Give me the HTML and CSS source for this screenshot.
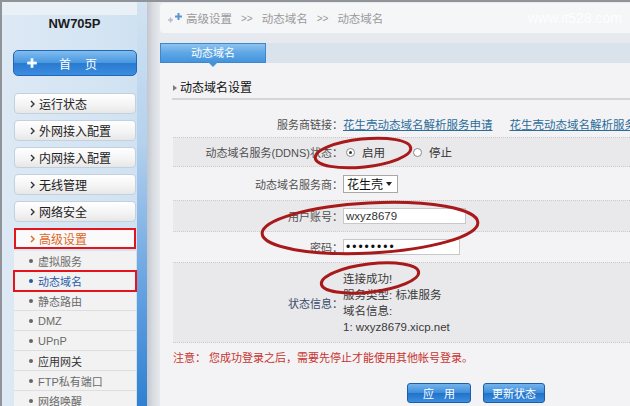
FILE: index.html
```html
<!DOCTYPE html>
<html lang="zh-CN">
<head>
    <meta charset="UTF-8">
    <meta name="viewport" content="width=device-width, initial-scale=1.0">
    <title>动态域名</title>
    <link rel="stylesheet" href="styles.css">
</head>
<body>
    <div class="frame">
        <!-- Left navigation -->
        <aside class="sidebar">
            <div class="sidebar-top"></div>
            <div class="model">NW705P</div>
            <a class="home-btn" href="#">
                <svg class="home-icon" width="10" height="10" viewBox="0 0 10 10">
                    <path d="M5 1v8M1 5h8" stroke="#cfe6fb" stroke-width="3" stroke-linecap="round"/>
                    <path d="M5 1.5v7M1.5 5h7" stroke="#ffffff" stroke-width="1.4" stroke-linecap="round"/>
                </svg>
                <span class="home-word">首</span>
                <span class="home-word">页</span>
            </a>
            <ul class="menu">
                <li class="menu-item"><svg class="chev" width="5" height="8" viewBox="0 0 5 8"><polyline points="1,1 4,4 1,7"/></svg>运行状态</li>
                <li class="menu-item"><svg class="chev" width="5" height="8" viewBox="0 0 5 8"><polyline points="1,1 4,4 1,7"/></svg>外网接入配置</li>
                <li class="menu-item"><svg class="chev" width="5" height="8" viewBox="0 0 5 8"><polyline points="1,1 4,4 1,7"/></svg>内网接入配置</li>
                <li class="menu-item"><svg class="chev" width="5" height="8" viewBox="0 0 5 8"><polyline points="1,1 4,4 1,7"/></svg>无线管理</li>
                <li class="menu-item"><svg class="chev" width="5" height="8" viewBox="0 0 5 8"><polyline points="1,1 4,4 1,7"/></svg>网络安全</li>
                <li class="menu-item current"><svg class="chev" width="5" height="8" viewBox="0 0 5 8"><polyline points="1,1 4,4 1,7"/></svg>高级设置</li>
            </ul>
            <ul class="submenu">
                <li><span class="dot"></span>虚拟服务</li>
                <li class="selected"><span class="dot"></span>动态域名</li>
                <li><span class="dot"></span>静态路由</li>
                <li><span class="dot"></span>DMZ</li>
                <li><span class="dot"></span>UPnP</li>
                <li class="dark"><span class="dot"></span>应用网关</li>
                <li><span class="dot"></span>FTP私有端口</li>
                <li><span class="dot"></span>网络唤醒</li>
            </ul>
        </aside>

        <!-- Content -->
        <main class="main">
            <div class="crumb">
                <svg class="crumb-icon" width="16" height="12" viewBox="0 0 16 12">
                    <path d="M1 8h5M3.5 5.5v5" stroke="#b8bcc1" stroke-width="1.6"/>
                    <path d="M8 4.5h7M11.5 1v7" stroke="#5a96d2" stroke-width="2"/>
                </svg>
                <span>高级设置</span>
                <span class="sep">&gt;&gt;</span>
                <span>动态域名</span>
                <span class="sep">&gt;&gt;</span>
                <span>动态域名</span>
                <span class="watermark">www.it528.com</span>
            </div>

            <div class="tabs">
                <div class="tab">动态域名</div>
            </div>

            <div class="panel">
                <h2 class="section-title">动态域名设置</h2>

                <div class="form">
                    <div class="row r-link">
                        <div class="label">服务商链接：</div>
                        <div class="value">
                            <a class="link" href="#">花生壳动态域名解析服务申请</a>
                            <a class="link" href="#">花生壳动态域名解析服务帮助</a>
                        </div>
                    </div>
                    <div class="row shade r-state">
                        <div class="label">动态域名服务(DDNS)状态：</div>
                        <div class="value">
                            <span class="radio on"></span><span class="opt">启用</span>
                            <span class="radio"></span><span class="opt">停止</span>
                        </div>
                    </div>
                    <div class="row r-provider">
                        <div class="label">动态域名服务商：</div>
                        <div class="value">
                            <div class="select">花生壳<span class="caret"></span></div>
                        </div>
                    </div>
                    <div class="row shade r-user">
                        <div class="label">用户账号：</div>
                        <div class="value"><div class="field">wxyz8679</div></div>
                    </div>
                    <div class="row r-pass">
                        <div class="label">密码：</div>
                        <div class="value"><div class="field pass">••••••••</div></div>
                    </div>
                    <div class="row shade r-status">
                        <div class="label status-label">状态信息：</div>
                        <div class="value status-lines">
                            <div>连接成功!</div>
                            <div>服务类型: 标准服务</div>
                            <div>域名信息:</div>
                            <div>1: wxyz8679.xicp.net</div>
                        </div>
                    </div>
                </div>

                <p class="note">注意： 您成功登录之后，需要先停止才能使用其他帐号登录。</p>

                <div class="actions">
                    <button class="btn btn-apply">应 用</button>
                    <button class="btn btn-refresh">更新状态</button>
                </div>
            </div>
        </main>
    </div>

    <!-- hand drawn annotation marks -->
    <svg class="marks" width="630" height="406" viewBox="0 0 630 406">
        <g fill="none" stroke="#a8191c" stroke-width="3">
            <ellipse cx="363" cy="153" rx="48" ry="14" transform="rotate(-6 363 153)"/>
            <ellipse cx="370" cy="228" rx="108" ry="25" transform="rotate(-3 370 228)"/>
            <ellipse cx="370" cy="278" rx="49" ry="14" transform="rotate(-7 370 278)"/>
        </g>
    </svg>
</body>
</html>
```

FILE: styles.css
```css
* {
    box-sizing: border-box;
}

html, body {
    margin: 0;
    padding: 0;
}

body {
    width: 630px;
    height: 406px;
    overflow: hidden;
    position: relative;
    font-family: "Liberation Sans", "Noto Sans CJK SC", sans-serif;
    font-size: 11px;
    color: #444;
    background: #e6e9ed;
}

.frame {
    display: flex;
    height: 406px;
    border-top: 2px solid #909397;
    border-left: 2px solid #909397;
}

/* Sidebar */
.sidebar {
    width: 145px;
    flex-shrink: 0;
    overflow: hidden;
    background: linear-gradient(to right, #dde9f5, #d0e2f2);
    border-right: 10px solid #3c88d6;
    border-image: linear-gradient(to bottom, #d2e3f2 0%, #b4d1ed 35%, #5d9de0 75%, #2f7fd2 100%) 1;
}

.sidebar-top {
    height: 13px;
    background: #e9f0f6;
}

.model {
    height: 18px;
    line-height: 18px;
    padding-left: 10px;
    text-align: center;
    font-weight: bold;
    font-size: 13px;
    color: #1c1c1c;
}

.home-btn {
    display: flex;
    align-items: center;
    width: 124px;
    height: 26px;
    margin: 17px 0 0 11px;
    padding-left: 13px;
    border: 1px solid #2466b0;
    border-radius: 5px;
    background: linear-gradient(#80bdf0 0%, #4a98e0 48%, #2a7bd0 52%, #3a8de0 100%);
    color: #fff;
    font-size: 12px;
    text-decoration: none;
}

.home-icon {
    margin-right: 22px;
}

.home-word + .home-word {
    margin-left: 14px;
}

.menu,
.submenu {
    list-style: none;
    padding: 0;
}

.menu {
    margin: 17px 0 0 12px;
}

.menu-item {
    display: flex;
    align-items: center;
    width: 122px;
    height: 21px;
    margin-bottom: 6px;
    padding-left: 15px;
    border: 1px solid #c3d1de;
    border-radius: 4px;
    background: linear-gradient(#ffffff 0%, #f3f3f3 60%, #e7e7e7 100%);
    font-size: 12px;
    color: #222;
}

.menu-item:last-child {
    margin-bottom: 0;
}

.chev {
    margin-right: 4px;
    fill: none;
    stroke: #333;
    stroke-width: 1.4;
}

.menu-item.current {
    padding-left: 14px;
    border: 2px solid #e3141c;
    border-radius: 0;
    background: #fafafa;
    color: #e0651f;
}

.menu-item.current .chev {
    stroke: #e0651f;
}

.submenu {
    margin: 2px 0 0 12px;
}

.submenu li {
    display: flex;
    align-items: center;
    width: 122px;
    height: 20px;
    padding-left: 15px;
    background: #f2f2f2;
    border-bottom: 1px solid #dedede;
    color: #6a6a6a;
    font-size: 11px;
}

.dot {
    width: 4px;
    height: 4px;
    border-radius: 50%;
    background: #666;
    margin-right: 5px;
}

.submenu li.selected {
    color: #1f5ca8;
    outline: 2px solid #e3141c;
    outline-offset: -1px;
}

.submenu li.selected .dot {
    background: #1f5ca8;
}

.submenu li.dark {
    color: #333;
}

/* Main area */
.main {
    flex: 1;
    min-width: 0;
    overflow: hidden;
    display: flex;
    flex-direction: column;
    padding-left: 13px;
    background: linear-gradient(to right, #c2c7ce 0, #d8dce1 6px, #e6e9ed 13px);
}

.crumb {
    display: flex;
    align-items: center;
    height: 30px;
    margin-top: 1px;
    padding-left: 7px;
    border-radius: 4px 0 0 4px;
    background: #f5f6f8;
    color: #9a9a9a;
    font-size: 11.5px;
}

.crumb-icon {
    margin-right: 3px;
}

.sep {
    margin: 0 9px;
    font-size: 10px;
}

.watermark {
    margin-left: auto;
    margin-right: 8px;
    font-size: 14px;
    color: rgba(255, 255, 255, 0.9);
}

.tabs {
    display: flex;
    height: 20px;
    margin-top: 10px;
    background: #dae2eb;
}

.tab {
    position: relative;
    width: 106px;
    height: 20px;
    line-height: 18px;
    text-align: center;
    border: 1px solid #3f86cf;
    background: linear-gradient(#8cc4f0 0%, #5ea6e6 50%, #4494dd 100%);
    color: #fff;
    font-size: 11px;
}

.tab::after {
    content: "";
    position: absolute;
    left: 50%;
    top: 100%;
    transform: translateX(-50%);
    border: 5px solid transparent;
    border-top-color: #4a90d4;
    border-bottom: 0;
}

.panel {
    flex: 1;
    padding-left: 12px;
    background: #f3f3f5;
}

.section-title {
    position: relative;
    margin: 0;
    padding: 17px 0 2px 8px;
    line-height: 16px;
    font-size: 12px;
    font-weight: normal;
    color: #111;
    border-bottom: 2px solid #d5d5d5;
}

.section-title::before {
    content: "";
    position: absolute;
    left: 1px;
    top: 22px;
    border-left: 4px solid #7a7a7a;
    border-top: 3px solid transparent;
    border-bottom: 3px solid transparent;
}

.form {
    margin-top: 10px;
    margin-left: 1px;
}

.row {
    display: grid;
    grid-template-columns: 170px 1fr;
    align-items: center;
}

.row.shade {
    background: #e9e9eb;
    border-top: 1px dotted #cdcdcd;
    border-bottom: 1px dotted #cdcdcd;
}

.r-link { height: 27px; }
.r-state { height: 30px; }
.r-provider { height: 33px; }
.r-user { height: 32px; }
.r-pass { height: 30px; }
.r-status { height: 81px; }

.label {
    text-align: right;
    color: #505050;
    white-space: nowrap;
}

.value {
    display: flex;
    align-items: center;
    min-width: 0;
    overflow: hidden;
    white-space: nowrap;
}

.link {
    font-size: 11.5px;
    color: #2b6c9a;
    text-decoration: underline;
    margin-right: 17px;
}

.radio {
    position: relative;
    width: 9px;
    height: 9px;
    margin-left: 3px;
    margin-right: 7px;
    border: 1px solid #8a8a8a;
    border-radius: 50%;
    background: #fff;
}

.radio.on::after {
    content: "";
    position: absolute;
    left: 2px;
    top: 2px;
    width: 3px;
    height: 3px;
    border-radius: 50%;
    background: #333;
}

.opt {
    color: #333;
    font-size: 11.5px;
    margin-right: 25px;
}

.select {
    display: flex;
    align-items: center;
    width: 55px;
    height: 18px;
    padding-left: 3px;
    border: 1px solid #a8a8a8;
    background: #fff;
    color: #111;
    font-size: 12px;
}

.caret {
    margin-left: auto;
    margin-right: 5px;
    border-top: 4px solid #222;
    border-left: 3px solid transparent;
    border-right: 3px solid transparent;
}

.field {
    width: 123px;
    height: 16px;
    line-height: 14px;
    padding-left: 2px;
    border: 1px solid #c8c8c8;
    background: #fff;
    color: #333;
    font-size: 11.5px;
}

.field.pass {
    width: 117px;
    font-size: 12px;
    letter-spacing: 2px;
    color: #111;
}

.status-label {
    color: #3a4a6a;
}

.status-lines {
    display: block;
    line-height: 16px;
    font-size: 11.5px;
    color: #3a3a3a;
}

.note {
    margin: 7px 0 0 1px;
    line-height: 16px;
    font-size: 11px;
    color: #c8322e;
}

.actions {
    display: flex;
    gap: 12px;
    margin-top: 17px;
    padding-left: 235px;
}

.btn {
    height: 20px;
    padding: 0;
    border: 1px solid #1d5fa6;
    border-radius: 3px;
    background: linear-gradient(#74b4ec 0%, #3f8edb 48%, #2373c8 52%, #3a8de0 100%);
    color: #fff;
    font-family: "Liberation Sans", "Noto Sans CJK SC", sans-serif;
    font-size: 11px;
}

.btn-apply {
    width: 64px;
    word-spacing: 7px;
}

.btn-refresh {
    width: 62px;
}

.marks {
    position: absolute;
    left: 0;
    top: 0;
    pointer-events: none;
}
```
